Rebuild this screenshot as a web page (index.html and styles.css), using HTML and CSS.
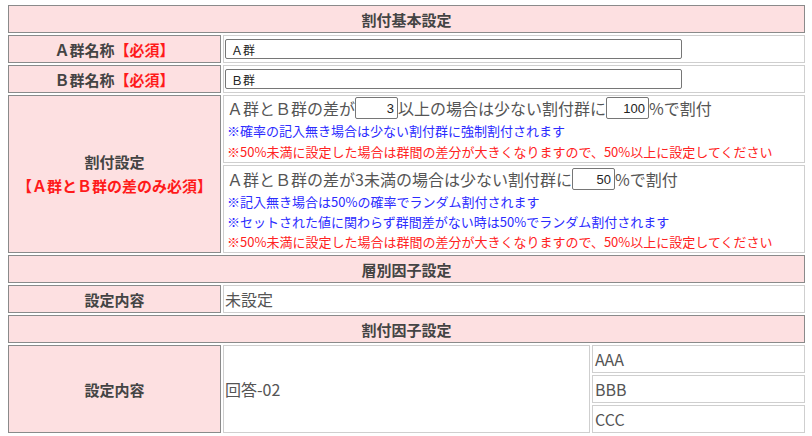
FILE: index.html
```html
<!DOCTYPE html>
<html lang="ja">
<head>
<meta charset="utf-8">
<title>割付設定</title>
<link rel="stylesheet" href="styles.css">
</head>
<body>
<div class="sheet">
  <div class="head">割付基本設定</div>
  <div class="row">
    <div class="label">Ａ群名称<span class="req">【必須】</span></div>
    <div class="value"><input class="name" type="text" value="Ａ群"></div>
  </div>
  <div class="row">
    <div class="label">Ｂ群名称<span class="req">【必須】</span></div>
    <div class="value"><input class="name" type="text" value="Ｂ群"></div>
  </div>
  <div class="row row-alloc">
    <div class="label label-stack">
      <div class="label-line">割付設定</div>
      <div class="label-line req">【Ａ群とＢ群の差のみ必須】</div>
    </div>
    <div class="stack">
      <div class="box box1">
        <div class="line">Ａ群とＢ群の差が<input class="num" type="text" value="3">以上の場合は少ない割付群に<input class="num" type="text" value="100">%で割付</div>
        <div class="note blue">※確率の記入無き場合は少ない割付群に強制割付されます</div>
        <div class="note red">※50%未満に設定した場合は群間の差分が大きくなりますので、50%以上に設定してください</div>
      </div>
      <div class="box box2">
        <div class="line">Ａ群とＢ群の差が3未満の場合は少ない割付群に<input class="num" type="text" value="50">%で割付</div>
        <div class="note blue">※記入無き場合は50%の確率でランダム割付されます</div>
        <div class="note blue">※セットされた値に関わらず群間差がない時は50%でランダム割付されます</div>
        <div class="note red">※50%未満に設定した場合は群間の差分が大きくなりますので、50%以上に設定してください</div>
      </div>
    </div>
  </div>
  <div class="head">層別因子設定</div>
  <div class="row">
    <div class="label">設定内容</div>
    <div class="value text">未設定</div>
  </div>
  <div class="head">割付因子設定</div>
  <div class="row row-factor">
    <div class="label">設定内容</div>
    <div class="value text">回答-02</div>
    <div class="substack">
      <div class="value text sub">AAA</div>
      <div class="value text sub">BBB</div>
      <div class="value text sub">CCC</div>
    </div>
  </div>
</div>
</body>
</html>
```
FILE: styles.css
```css
* { box-sizing: border-box; }

body {
  margin: 0;
  background: #fff;
  font-family: "Noto Sans CJK JP", "Noto Sans", sans-serif;
  color: #555;
}

.sheet {
  width: 797px;
  margin: 5px 0 0 8px;
  display: flex;
  flex-direction: column;
  gap: 2px;
}

.head {
  height: 28px;
  background: #fde0e1;
  border: 1px solid #8a8a8a;
  display: flex;
  align-items: center;
  justify-content: center;
  font-size: 15px;
  font-weight: bold;
  color: #444;
}

.row {
  display: grid;
  grid-template-columns: 213px 1fr;
  gap: 2px;
  height: 28px;
}

.label {
  background: #fde0e1;
  border: 1px solid #8a8a8a;
  display: flex;
  align-items: center;
  justify-content: center;
  font-size: 15px;
  font-weight: bold;
  color: #444;
  white-space: nowrap;
}

.req { color: #ff1a1a; }

.value {
  background: #fff;
  border: 1px solid #cfcfcf;
  display: flex;
  align-items: center;
  padding-left: 1px;
}

.text {
  font-size: 16px;
  color: #555;
}

.name {
  width: 457px;
  height: 20px;
  margin: 0;
  padding: 0 5px;
  border: 1px solid #767676;
  border-radius: 2px;
  font: 12px "Noto Sans CJK JP", sans-serif;
  color: #222;
}

.row-alloc { height: 158px; }

.label-stack {
  flex-direction: column;
  line-height: 24px;
}

.stack {
  display: flex;
  flex-direction: column;
  gap: 2px;
}

.box {
  border: 1px solid #cfcfcf;
  background: #fff;
  padding-left: 3px;
}

.box1 { height: 68px; }
.box2 { height: 88px; }

.line {
  display: flex;
  align-items: center;
  white-space: nowrap;
  font-size: 16px;
  color: #555;
  height: 24px;
}

.box2 .line { height: 26px; }

.num {
  width: 43px;
  height: 22px;
  margin: 0;
  padding: 0 3px 0 0;
  border: 1px solid #767676;
  border-radius: 2px;
  text-align: right;
  font: 13px "Liberation Sans", sans-serif;
  color: #222;
}

.note {
  font-size: 13px;
  line-height: 21px;
  white-space: nowrap;
}

.box2 .note { line-height: 20px; }

.blue { color: #2b2bff; }
.red { color: #ff2222; }

.row-factor {
  grid-template-columns: 213px 367px 213px;
  height: 88px;
}

.substack {
  display: flex;
  flex-direction: column;
  gap: 2px;
}

.sub {
  height: 28px;
  padding-left: 2px;
}
```
